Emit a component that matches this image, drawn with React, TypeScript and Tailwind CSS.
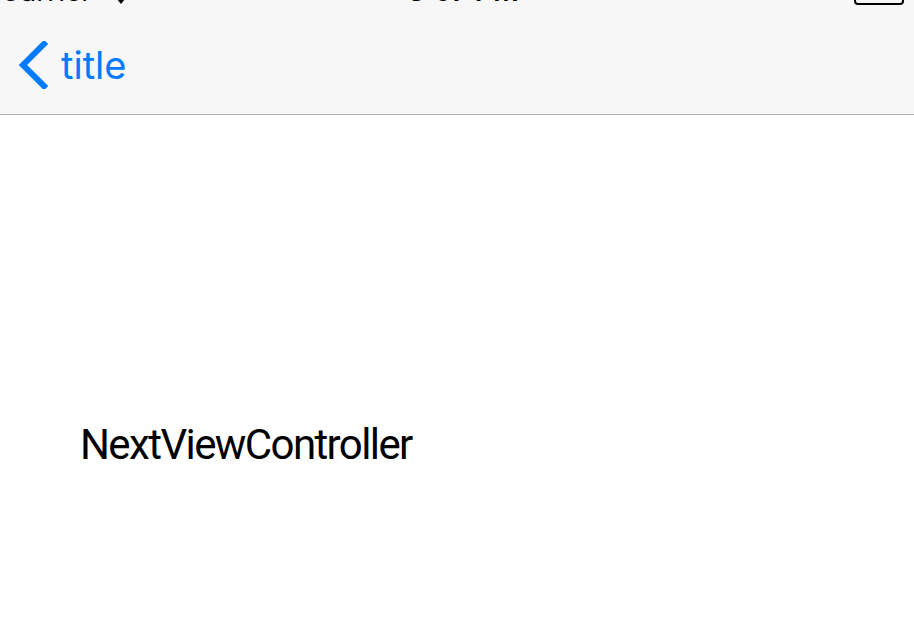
import React from 'react'

function Wifi() {
  return (
    <svg width="22" height="18" viewBox="0 0 22 18" className="text-black">
      <path d="M11 17 L2 6 A14 14 0 0 1 20 6 Z" fill="currentColor" />
    </svg>
  )
}

function Battery() {
  return (
    <div className="flex items-center">
      <div className="w-[50px] h-[22px] rounded-[4px] border-2 border-black" />
      <div className="w-[3px] h-[8px] bg-black rounded-r-sm" />
    </div>
  )
}

function StatusBar() {
  return (
    <div className="h-[40px] -mt-[35px] flex items-end justify-between pl-0 pr-[7px] text-black text-[28px] leading-none font-semibold">
      <div className="flex items-end gap-[18px]">
        <span className="font-normal">Carrier</span>
        <Wifi />
      </div>
      <span className="-ml-[60px]">3:07 PM</span>
      <Battery />
    </div>
  )
}

function NavBar() {
  return (
    <div className="h-[109px] flex items-center pl-[18px] text-[#007aff]">
      <svg width="30" height="48" viewBox="0 0 30 48" className="mt-[10px]">
        <path d="M26 3 L5 24 L26 45" fill="none" stroke="currentColor" strokeWidth="6" strokeLinecap="square" />
      </svg>
      <span className="ml-[13px] mt-[10px] text-[38px] leading-none">title</span>
    </div>
  )
}

export default function App() {
  return (
    <div className="w-[914px] h-[636px] overflow-hidden bg-white font-['Inter',sans-serif]">
      <header className="bg-[#f7f7f7] border-b border-[#b2b2b2]">
        <StatusBar />
        <NavBar />
      </header>
      <main className="pt-[309px] pl-[80px]">
        <p className="font-['Roboto',sans-serif] text-[42px] leading-none tracking-[-1.6px] text-black">NextViewController</p>
      </main>
    </div>
  )
}
